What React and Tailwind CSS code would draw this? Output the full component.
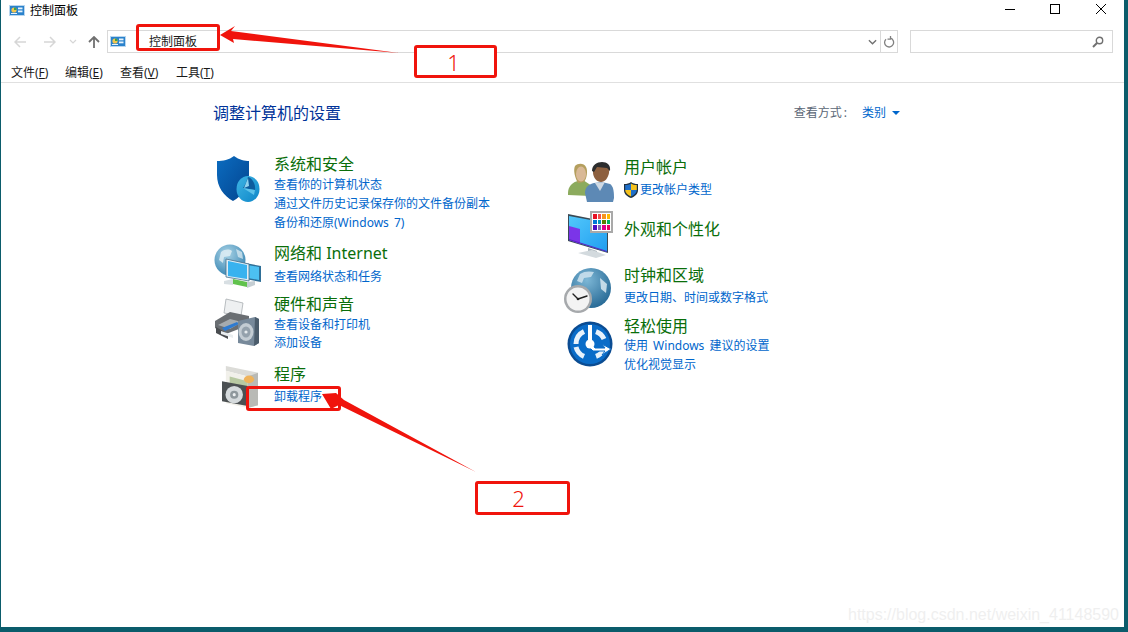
const leftSections = [
  {
    title: '系统和安全',
    icon: <ShieldIcon />,
    box: 'h-[89px]',
    iconBox: 'mt-[3px]',
    links: ['查看你的计算机状态', '通过文件历史记录保存你的文件备份副本', '备份和还原(Windows 7)'],
  },
  {
    title: '网络和 Internet',
    icon: <NetworkIcon />,
    box: 'h-[51px]',
    iconBox: 'mt-[2px]',
    linkBox: 'pt-[3px]',
    links: ['查看网络状态和任务'],
  },
  {
    title: '硬件和声音',
    icon: <PrinterIcon />,
    box: 'h-[70px]',
    iconBox: 'mt-[4px]',
    linkBox: 'pt-px',
    linkClass: 'h-[18px]',
    links: ['查看设备和打印机', '添加设备'],
  },
  {
    title: '程序',
    icon: <ProgramsIcon />,
    box: 'h-[60px]',
    iconBox: 'mt-[3px] ml-[9px]',
    linkBox: 'pt-[2px]',
    links: ['卸载程序'],
  },
]

const rightSections = [
  {
    title: '用户帐户',
    icon: <UsersIcon />,
    box: 'h-[62px]',
    iconBox: 'mt-[6px]',
    linkBox: 'pt-[2px]',
    links: ['更改帐户类型'],
    shield: true,
  },
  {
    title: '外观和个性化',
    icon: <DisplayIcon />,
    box: 'h-[46px]',
    iconBox: 'mt-[-7px] ml-[1px]',
    links: [],
  },
  {
    title: '时钟和区域',
    icon: <ClockIcon />,
    box: 'h-[51px]',
    iconBox: 'mt-[4px] ml-[-3px]',
    linkBox: 'pt-[2px]',
    links: ['更改日期、时间或数字格式'],
  },
  {
    title: '轻松使用',
    icon: <AccessIcon />,
    box: 'h-[70px]',
    iconBox: 'mt-[5px] ml-[-1px]',
    linkBox: 'mt-[-1px]',
    links: ['使用 Windows 建议的设置', '优化视觉显示'],
  },
]

function CplIcon() {
  return (
    <svg viewBox="0 0 16 11" className="h-[11px] w-4 shrink-0">
      <rect x="0" y="0" width="16" height="11" fill="#b9d6ee" />
      <rect x="1" y="1" width="14" height="9" fill="#2a82cc" />
      <circle cx="5" cy="5" r="2.600" fill="#f3c64e" />
      <path d="M5 5V2.400A2.600 2.600 0 0 1 7.600 5Z" fill="#3ba34a" />
      <rect x="9" y="2.500" width="4.500" height="1.800" fill="#e8f3fb" />
      <rect x="9" y="5.500" width="4.500" height="1.800" fill="#e8f3fb" />
      <rect x="2" y="8" width="6" height="1" fill="#e8f3fb" />
    </svg>
  )
}

function ShieldIcon() {
  return (
    <svg viewBox="0 0 48 48" className="h-12 w-12">
      <defs>
        <linearGradient id="sh" x1="0" y1="0" x2="1" y2="1">
          <stop offset="0" stopColor="#0b6cc0" />
          <stop offset="1" stopColor="#03448f" />
        </linearGradient>
        <linearGradient id="pie" x1="0" y1="0" x2="1" y2="1">
          <stop offset="0" stopColor="#3fb4e4" />
          <stop offset="1" stopColor="#0c86c8" />
        </linearGradient>
      </defs>
      <path d="M21 0c5 4 11 5 15 5v14c0 12-7 21-16 26C11 40 4 31 4 19V5c6 0 12-1 17-5Z" fill="url(#sh)" />
      <ellipse cx="35" cy="33" rx="11.500" ry="13" fill="url(#pie)" />
      <path d="M35 21c-1 3-3 9-5 11l12 2c1-6-3-12-7-13Z" fill="#0d5c9e" />
      <path d="M35 22l-4 10 5-2Z" fill="#8fd3ef" />
      <path d="M30 32l12 2-1 5Z" fill="#5cc2ea" />
    </svg>
  )
}

function NetworkIcon() {
  return (
    <svg viewBox="0 0 48 48" className="h-12 w-12">
      <defs>
        <radialGradient id="gl" cx="0.4" cy="0.3" r="0.8">
          <stop offset="0" stopColor="#a9d3e6" />
          <stop offset="1" stopColor="#2f7fae" />
        </radialGradient>
      </defs>
      <circle cx="17" cy="16" r="15.500" fill="url(#gl)" />
      <path d="M8 8c4-3 8-3 11-1l-2 5-6 1-1 6-4-3Z" fill="#e3f0f5" opacity="0.8" />
      <path d="M23 5l6 3 1 7-5-2Z" fill="#e3f0f5" opacity="0.7" />
      <path d="M27 18l21 4v16l-21-4Z" fill="#2f6f97" />
      <path d="M29 20l17 3v13l-17-3Z" fill="#4cc0f2" />
      <path d="M13 15l23 5v17l-23-4Z" fill="#dfeef7" stroke="#4a6f88" strokeWidth="0.800" />
      <path d="M15 17l19 4v14l-19-3Z" fill="#38b2ef" />
      <path d="M20 35l14 3v5l-14-3Z" fill="#61c24d" />
      <path d="M11 37l9-2v6l-9-1Z" fill="#d8dfe3" />
      <path d="M34 38l8-1v4l-8 3Z" fill="#c5ced3" />
    </svg>
  )
}

function PrinterIcon() {
  return (
    <svg viewBox="0 0 48 50" className="h-[50px] w-12">
      <path d="M13 2l17 4-2 13-17-3Z" fill="#eef0f1" stroke="#a8adb1" strokeWidth="0.800" />
      <path d="M2 24l15-9 19 4v9L13 37 2 31Z" fill="#6a6e72" />
      <path d="M3 30l12 7v5L3 36Z" fill="#4a4d50" />
      <path d="M5 28l12-6 12 3-12 7Z" fill="#a5abaf" />
      <path d="M9 31l15-6 2 2-14 7Z" fill="#2f7bd0" />
      <path d="M8 34l12 4v3l-12-4Z" fill="#e9edef" />
      <path d="M25 24l17-4 4 2v24l-5 3-16-3Z" fill="#77899a" />
      <path d="M42 20l4 2v24l-5 3Z" fill="#4b5c6b" />
      <ellipse cx="33" cy="35" rx="7.500" ry="9" fill="#c3ccd3" />
      <ellipse cx="33" cy="35" rx="4.500" ry="5.500" fill="#94a1ac" />
      <circle cx="33" cy="35" r="1.600" fill="#e6ebee" />
    </svg>
  )
}

function ProgramsIcon() {
  return (
    <svg viewBox="9 4 28 44" preserveAspectRatio="none" className="h-[42px] w-9">
      <path d="M12 4l25 7v34l-8 3V15L12 9Z" fill="#dcdcd8" />
      <path d="M12 9l17 6v33l-17-5Z" fill="#f1f0ea" />
      <path d="M29 15l8-4v34l-8 3Z" fill="#b9bab6" />
      <path d="M15 15l14 5v14l-14-5Z" fill="#b8c9a2" />
      <circle cx="30" cy="18" r="4" fill="#efb35c" />
      <path d="M9 20l20 5v21L9 41Z" fill="#4b5052" />
      <ellipse cx="18.500" cy="34" rx="6.800" ry="9" fill="#d5dadc" />
      <ellipse cx="18.500" cy="34" rx="3.200" ry="4.200" fill="#8f989c" />
      <ellipse cx="18.500" cy="34" rx="1.200" ry="1.600" fill="#eef1f2" />
    </svg>
  )
}

function UsersIcon() {
  return (
    <svg viewBox="0 0 48 40" className="h-10 w-12">
      <path d="M1 31c0-7 5-11 10-12l5-1 9 6-1 10-23-1Z" fill="#8cab5e" />
      <path d="M8 4c3-3 9-3 11 1 2 3 1 12-2 15l-6 1C8 16 6 8 8 4Z" fill="#b49f5e" />
      <ellipse cx="14" cy="12" rx="5" ry="7.500" fill="#d9b997" />
      <path d="M18 31c0-6 4-9 9-10l8-1 8 2c3 2 4 6 4 14l-1 4H20Z" fill="#5d89b5" />
      <path d="M28 21l5 8 5-9Z" fill="#cfd9e3" />
      <path d="M26 10c0-6 4-9 9-9s8 4 7 10c-1 5-4 9-8 9s-8-4-8-10Z" fill="#8d603f" />
      <path d="M25 9c0-6 5-9 10-9s9 3 8 9l-3-3-10-1-3 5Z" fill="#2c2d2e" />
    </svg>
  )
}

function DisplayIcon() {
  const colors = ['#e81123', '#f2504b', '#f7941d', '#ffb900', '#0078d7', '#0099bc', '#5c7f00', '#00b25c', '#4b0fc4', '#8764b8', '#e3008c', '#ea005e']
  return (
    <div className="relative h-12 w-12">
      <svg viewBox="0 0 48 48" className="h-12 w-12">
        <defs>
          <linearGradient id="scr" x1="0" y1="0" x2="1" y2="1">
            <stop offset="0" stopColor="#53c8fb" />
            <stop offset="1" stopColor="#1f9df0" />
          </linearGradient>
        </defs>
        <path d="M0 3l40 8v31L0 30Z" fill="#3a4a55" />
        <path d="M1 5l38 7v29L1 29Z" fill="url(#scr)" />
        <path d="M1 15l11 3v15L1 29Z" fill="#7b35e8" />
        <path d="M1 29l38 12v-1L1 28Z" fill="#5a1fc4" />
        <path d="M20 37l9 3v3l-9-2Z" fill="#aab4ba" />
        <path d="M10 42l14-3 14 5-10 3Z" fill="#d3dade" />
      </svg>
      {/* colour swatch card sits over the monitor */}
      <div className="absolute left-[22px] top-0 grid h-[22px] w-[23px] grid-cols-4 gap-px border-2 border-[#a9a9a9] bg-white p-px">
        {colors.map((color) => (
          <span key={color} style={{ backgroundColor: color }} />
        ))}
      </div>
    </div>
  )
}

function ClockIcon() {
  return (
    <svg viewBox="0 0 48 48" className="h-12 w-12">
      <defs>
        <radialGradient id="gl2" cx="0.4" cy="0.3" r="0.8">
          <stop offset="0" stopColor="#7db7d6" />
          <stop offset="1" stopColor="#1f628f" />
        </radialGradient>
      </defs>
      <circle cx="27" cy="20" r="20" fill="url(#gl2)" />
      <path d="M16 6c4-3 10-3 14-2l-3 5-7 1-2 5-5-2Z" fill="#cfe3ee" opacity="0.85" />
      <path d="M36 10l7 6-1 9-5-4Z" fill="#d9e9f1" opacity="0.85" />
      <circle cx="14" cy="31" r="14" fill="#a6a9ac" />
      <circle cx="14" cy="31" r="11.500" fill="#f3f3f3" />
      <path d="M14 31l-5-5M14 31l9-3" stroke="#222" strokeWidth="1.400" strokeLinecap="round" />
      <circle cx="14" cy="31" r="1.300" fill="#222" />
    </svg>
  )
}

function AccessIcon() {
  return (
    <svg viewBox="0 0 48 48" className="h-12 w-12">
      <circle cx="24" cy="24" r="22.500" fill="#0b4c92" />
      <circle cx="24" cy="24" r="20" fill="#0a6cc8" />
      <path d="M10 24a14 14 0 0 1 8-12.600M30 11.600A14 14 0 0 1 38 19M38 29a14 14 0 0 1-8 7.400M18 36.400A14 14 0 0 1 10 27" fill="none" stroke="#e8f2fb" strokeWidth="5" />
      <path d="M22 5h4v17h-4Z" fill="#fff" />
      <path d="M24 21l5 7h10l-3-4 9 5-9 6 3-4H27l-4-4Z" fill="#fff" stroke="#0a6cc8" strokeWidth="1" />
      <circle cx="24" cy="24" r="4.500" fill="#fff" />
    </svg>
  )
}

function UacShield() {
  return (
    <svg viewBox="0 0 14 16" className="h-4 w-[14px] shrink-0">
      <path d="M7 0c2 1.500 4 2 7 2v6c0 4-3 6.500-7 8-4-1.500-7-4-7-8V2c3 0 5-.5 7-2Z" fill="#20303f" />
      <path d="M7 1.500V8H1.200V3c2.500 0 4-.5 5.800-1.500Z" fill="#1f6fc9" />
      <path d="M7 1.500c1.800 1 3.300 1.500 5.800 1.500v5H7Z" fill="#f6c21c" />
      <path d="M1.200 8H7v6.500C3.500 13 1.200 11 1.200 8Z" fill="#f6c21c" />
      <path d="M7 8h5.800c0 3-2.300 5-5.800 6.500Z" fill="#1f6fc9" />
    </svg>
  )
}

function Section({ item, iconWidth }) {
  return (
    <div className={`flex ${item.box}`}>
      <div className={`shrink-0 ${iconWidth}`}>
        <div className={item.iconBox}>{item.icon}</div>
      </div>
      <div>
        <div className="h-[22px] text-base leading-[22px] text-[#0a6e0a]">{item.title}</div>
        <div className={item.linkBox}>
          {item.links.map((link) => (
            <div key={link} className={`flex items-center gap-[2px] text-xs text-[#0066cc] [word-spacing:2px] ${item.linkClass || 'h-[19px]'}`}>
              {item.shield && <UacShield />}
              <span>{link}</span>
            </div>
          ))}
        </div>
      </div>
    </div>
  )
}

function Annotations() {
  const box = 'absolute rounded-[3px] border-[3px] border-[#f0140c]'
  const label = 'absolute flex items-center justify-center rounded-[3px] border-[3px] border-[#f0140c] bg-white text-[22px] leading-none font-light text-[#f0140c]'
  return (
    <>
      <div className={`${box} left-[136px] top-[24px] h-[27px] w-[84px]`} />
      <div className={`${box} left-[246px] top-[386px] h-[25px] w-[95px]`} />
      <div className={`${label} left-[414px] top-[45px] h-[33px] w-[83px] pr-[4px]`}>1</div>
      <div className={`${label} left-[475px] top-[481px] h-[34px] w-[95px] pr-[8px]`}>2</div>
      <svg viewBox="0 0 1128 632" className="pointer-events-none absolute left-0 top-0 h-[632px] w-[1128px]">
        <polygon points="220,35 235,26 231,31 399,53 233,39 234,43" fill="#f0140c" />
        <polygon points="322,394 336,393 344,400 476,472 339,405 331,409" fill="#f0140c" />
      </svg>
    </>
  )
}

export default function App() {
  return (
    <div className="relative h-[632px] w-[1128px] overflow-hidden bg-[#0b5c6b] pb-[5px] pl-px pr-1 font-['Noto_Sans','Noto_Sans_CJK_SC',sans-serif]">
      <div className="flex h-full flex-col bg-white">
        {/* title bar */}
        <div className="flex h-[22px] items-center">
          <div className="mb-[2px] ml-[8px] mr-[5px]"><CplIcon /></div>
          <span className="text-xs text-black">控制面板</span>
          <div className="ml-auto flex items-center pb-[4px] pr-[18px]">
            <span className="h-px w-[10px] bg-black" />
            <span className="ml-[35px] h-[10px] w-[10px] border border-black" />
            <svg viewBox="0 0 10 10" className="ml-[36px] h-[10px] w-[10px]">
              <path d="M0 0l10 10M10 0L0 10" stroke="#000" strokeWidth="1" />
            </svg>
          </div>
        </div>

        {/* nav row */}
        <div className="mt-[8px] flex h-[23px] items-center">
          <svg viewBox="0 0 12 12" className="ml-[13px] h-3 w-3" fill="none" stroke="#d6d6d6" strokeWidth="1.500">
            <path d="M12 6H1M6 1L1 6l5 5" />
          </svg>
          <svg viewBox="0 0 12 12" className="ml-[18px] h-3 w-3" fill="none" stroke="#d6d6d6" strokeWidth="1.500">
            <path d="M0 6h11M6 1l5 5-5 5" />
          </svg>
          <svg viewBox="0 0 8 6" className="ml-[13px] h-[6px] w-2" fill="none" stroke="#d6d6d6" strokeWidth="1.200">
            <path d="M1 1l3 3 3-3" />
          </svg>
          <svg viewBox="0 0 12 12" className="ml-[11px] h-3 w-3" fill="none" stroke="#707070" strokeWidth="1.800">
            <path d="M6 12V1M1 6l5-5 5 5" />
          </svg>
          <div className="ml-[7px] flex h-full w-[791px] items-center border border-[#d9d9d9]">
            <div className="ml-[2px]"><CplIcon /></div>
            <span className="ml-[23px] pt-px text-xs text-[#1a1a1a]">控制面板</span>
            <svg viewBox="0 0 10 6" className="ml-auto mr-[3px] h-[6px] w-[9px]" fill="none" stroke="#707070" strokeWidth="1.500">
              <path d="M1 1l4 4 4-4" />
            </svg>
            <div className="flex h-full w-[17px] items-center justify-center border-l border-[#d9d9d9]">
              <svg viewBox="0 0 12 12" className="h-3 w-3" fill="none" stroke="#808080" strokeWidth="1.300">
                <path d="M7.500 2.200A4.500 4.500 0 1 1 3 3.200M7.500 0v3.200h-3" />
              </svg>
            </div>
          </div>
          <div className="ml-[12px] flex h-full w-[203px] items-center justify-end border border-[#d9d9d9] pr-[8px]">
            <svg viewBox="0 0 12 12" className="h-3 w-3" fill="none" stroke="#707070">
              <circle cx="7.500" cy="4.500" r="3.200" strokeWidth="1.400" />
              <path d="M5 7L1 11" strokeWidth="2" />
            </svg>
          </div>
        </div>

        {/* menu row */}
        <div className="mt-[10px] flex h-[19px] items-center pl-[10px] text-xs text-[#1a1a1a]">
          <span className="w-[54px]">文件(<span className="underline">F</span>)</span>
          <span className="w-[55px]">编辑(<span className="underline">E</span>)</span>
          <span className="w-[56px]">查看(<span className="underline">V</span>)</span>
          <span>工具(<span className="underline">T</span>)</span>
        </div>
        <div className="h-px bg-[#e0e0e0]" />

        {/* content */}
        <div className="relative flex-1 pl-[212px]">
          <div className="mt-[18px] flex h-[24px] w-[687px] items-center justify-between">
            <span className="text-base text-[#003399]">调整计算机的设置</span>
            <div className="flex items-center text-xs">
              <span className="text-[#5b6776]">查看方式<span className="ml-[2px]">:</span></span>
              <span className="ml-[15px] text-[#0066cc]">类别</span>
              <span className="ml-[6px] h-0 w-0 border-x-[4px] border-t-[4px] border-x-transparent border-t-[#0066cc]" />
            </div>
          </div>
          <div className="mt-[28px] flex">
            <div className="w-[354px]">
              {leftSections.map((item) => (
                <Section key={item.title} item={item} iconWidth="w-[61px]" />
              ))}
            </div>
            <div className="pt-[3px]">
              {rightSections.map((item) => (
                <Section key={item.title} item={item} iconWidth="w-[57px]" />
              ))}
            </div>
          </div>
          <div className="absolute bottom-[2px] right-[5px] font-['Liberation_Sans',sans-serif] text-[16px] leading-5 text-[#efefef]">
            https://blog.csdn.net/weixin_41148590
          </div>
        </div>
      </div>
      <Annotations />
    </div>
  )
}
